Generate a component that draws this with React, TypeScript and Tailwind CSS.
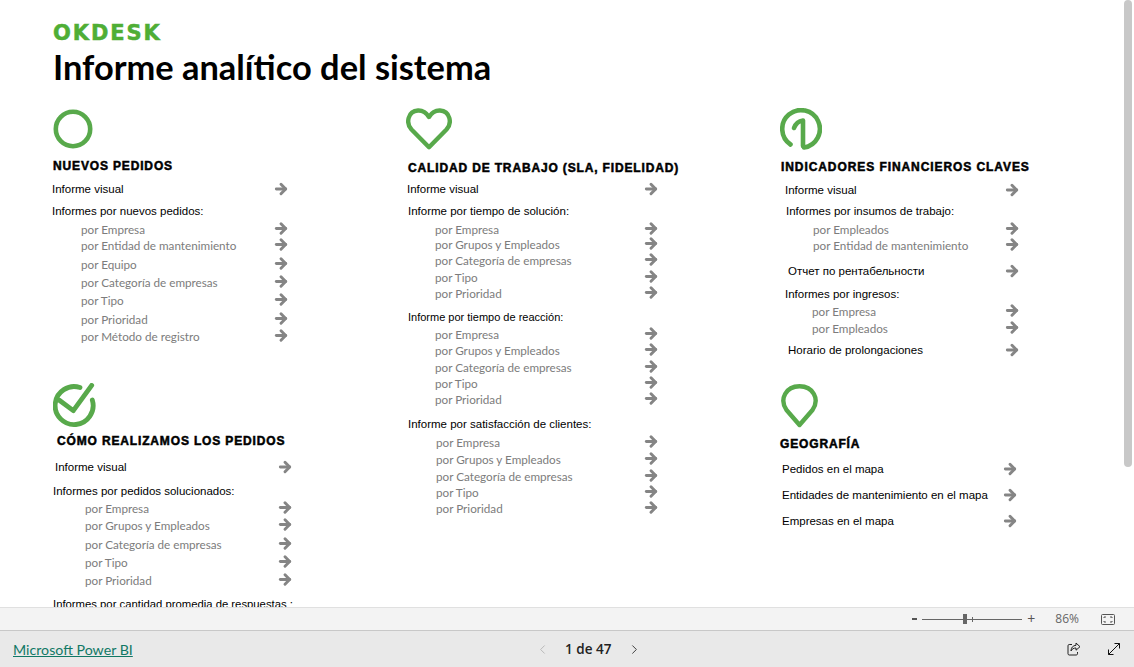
import { ArrowRight, ChevronLeft, ChevronRight } from 'lucide-react'

type RowData = {
  text: string
  // margin + indent, written out so tailwind picks them up
  cls: string
  kind?: 'main' | 'sub'
}

const GREEN = '#58a94b'

function Arrow() {
  return <ArrowRight className="-mr-[1px] h-[16px] w-[16px] text-[#858585]" strokeWidth={4.4} />
}

function Rows({ rows, width }: { rows: RowData[]; width: string }) {
  return (
    <div className={`text-[11.5px] ${width}`}>
      {rows.map((row, i) => (
        <div key={i} className={`flex h-[16px] items-center justify-between ${row.cls}`}>
          {row.kind === 'sub' ? (
            <span className="font-['Lato',sans-serif] text-[11.7px] whitespace-nowrap text-[#7c7c7c]">{row.text}</span>
          ) : (
            <span className="translate-y-[1px] font-['Liberation_Sans',sans-serif] whitespace-nowrap text-black">{row.text}</span>
          )}
          {!row.text.endsWith(':') && (
            <span className={row.kind === 'sub' ? '-translate-y-[1.5px]' : ''}>
              <Arrow />
            </span>
          )}
        </div>
      ))}
    </div>
  )
}

function Heading({ children, className }: { children: string; className: string }) {
  return (
    <h2 className={`font-['Liberation_Sans',sans-serif] text-[12px] leading-[16px] font-bold tracking-[0.85px] whitespace-nowrap text-black [-webkit-text-stroke:0.5px_black] ${className}`}>
      {children}
    </h2>
  )
}

const nuevos: RowData[] = [
  { text: 'Informe visual', cls: 'mt-[7px]' },
  { text: 'Informes por nuevos pedidos:', cls: 'mt-[6px]' },
  { text: 'por Empresa', cls: 'mt-[3px] pl-[29px]', kind: 'sub' },
  { text: 'por Entidad de mantenimiento', cls: 'mt-[0px] pl-[29px]', kind: 'sub' },
  { text: 'por Equipo', cls: 'mt-[3px] pl-[29px]', kind: 'sub' },
  { text: 'por Categoría de empresas', cls: 'mt-[2px] pl-[29px]', kind: 'sub' },
  { text: 'por Tipo', cls: 'mt-[2px] pl-[29px]', kind: 'sub' },
  { text: 'por Prioridad', cls: 'mt-[3px] pl-[29px]', kind: 'sub' },
  { text: 'por Método de registro', cls: 'mt-[1px] pl-[29px]', kind: 'sub' },
]

const realizamos: RowData[] = [
  { text: 'Informe visual', cls: 'mt-[10px] pl-[3px]' },
  { text: 'Informes por pedidos solucionados:', cls: 'mt-[8px] pl-[1px]' },
  { text: 'por Empresa', cls: 'mt-[2px] pl-[33px]', kind: 'sub' },
  { text: 'por Grupos y Empleados', cls: 'mt-[1px] pl-[33px]', kind: 'sub' },
  { text: 'por Categoría de empresas', cls: 'mt-[3px] pl-[33px]', kind: 'sub' },
  { text: 'por Tipo', cls: 'mt-[2px] pl-[33px]', kind: 'sub' },
  { text: 'por Prioridad', cls: 'mt-[2px] pl-[33px]', kind: 'sub' },
  { text: 'Informes por cantidad promedia de respuestas :', cls: 'mt-[6px] pl-[1px] text-[11.3px]' },
]

const calidad: RowData[] = [
  { text: 'Informe visual', cls: 'mt-[5px] pl-[1px]' },
  { text: 'Informe por tiempo de solución:', cls: 'mt-[6px] pl-[2px]' },
  { text: 'por Empresa', cls: 'mt-[3px] pl-[29px]', kind: 'sub' },
  { text: 'por Grupos y Empleados', cls: 'mt-[-1px] pl-[29px]', kind: 'sub' },
  { text: 'por Categoría de empresas', cls: 'mt-[0px] pl-[29px]', kind: 'sub' },
  { text: 'por Tipo', cls: 'mt-[1px] pl-[29px]', kind: 'sub' },
  { text: 'por Prioridad', cls: 'mt-[0px] pl-[29px]', kind: 'sub' },
  { text: 'Informe por tiempo de reacción:', cls: 'mt-[6px] pl-[2px] text-[11px]' },
  { text: 'por Empresa', cls: 'mt-[3px] pl-[29px]', kind: 'sub' },
  { text: 'por Grupos y Empleados', cls: 'mt-[0px] pl-[29px]', kind: 'sub' },
  { text: 'por Categoría de empresas', cls: 'mt-[1px] pl-[29px]', kind: 'sub' },
  { text: 'por Tipo', cls: 'mt-[0px] pl-[29px]', kind: 'sub' },
  { text: 'por Prioridad', cls: 'mt-[0px] pl-[29px]', kind: 'sub' },
  { text: 'Informe por satisfacción de clientes:', cls: 'mt-[8px] pl-[2px]' },
  { text: 'por Empresa', cls: 'mt-[3px] pl-[30px]', kind: 'sub' },
  { text: 'por Grupos y Empleados', cls: 'mt-[1px] pl-[30px]', kind: 'sub' },
  { text: 'por Categoría de empresas', cls: 'mt-[1px] pl-[30px]', kind: 'sub' },
  { text: 'por Tipo', cls: 'mt-[0px] pl-[30px]', kind: 'sub' },
  { text: 'por Prioridad', cls: 'mt-[0px] pl-[30px]', kind: 'sub' },
]

const financieros: RowData[] = [
  { text: 'Informe visual', cls: 'mt-[7px] pl-[5px]' },
  { text: 'Informes por insumos de trabajo:', cls: 'mt-[5px] pl-[6px]' },
  { text: 'por Empleados', cls: 'mt-[3px] pl-[33px]', kind: 'sub' },
  { text: 'por Entidad de mantenimiento', cls: 'mt-[0px] pl-[33px]', kind: 'sub' },
  { text: 'Отчет по рентабельности', cls: 'mt-[9px] pl-[8px]' },
  { text: 'Informes por ingresos:', cls: 'mt-[7px] pl-[5px]' },
  { text: 'por Empresa', cls: 'mt-[2px] pl-[32px]', kind: 'sub' },
  { text: 'por Empleados', cls: 'mt-[1px] pl-[32px]', kind: 'sub' },
  { text: 'Horario de prolongaciones', cls: 'mt-[5px] pl-[8px]' },
]

const geografia: RowData[] = [
  { text: 'Pedidos en el mapa', cls: 'mt-[9px] pl-[2px]' },
  { text: 'Entidades de mantenimiento en el mapa', cls: 'mt-[10px] pl-[2px]' },
  { text: 'Empresas en el mapa', cls: 'mt-[10px] pl-[2px]' },
]

function CircleIcon() {
  return (
    <svg width="40" height="40" viewBox="0 0 40 40" fill="none" className="block">
      <circle cx="20" cy="20" r="17.2" stroke={GREEN} strokeWidth="4.6" />
    </svg>
  )
}

function CheckIcon() {
  return (
    <svg width="43" height="44" viewBox="0 0 43 44" fill="none" className="block">
      <path d="M39.3 17A19 19 0 1 1 27 4.5" stroke={GREEN} strokeWidth="4.8" strokeLinecap="round" />
      <path d="M6 17L20.3 27.7L38.7 2.4" stroke={GREEN} strokeWidth="4.8" strokeLinecap="round" strokeLinejoin="round" />
    </svg>
  )
}

function HeartIcon() {
  return (
    <svg width="46" height="42" viewBox="0 0 46 42" fill="none" className="block">
      <path
        d="M23 39.2L5.5 21.5C-0.5 15 2 3 12 2.5C17 2.3 20.5 5 23 9C25.5 5 29 2.3 34 2.5C44 3 46.5 15 40.5 21.5Z"
        stroke={GREEN}
        strokeWidth="4.4"
        strokeLinejoin="round"
      />
    </svg>
  )
}

function OneIcon() {
  return (
    <svg width="42" height="42" viewBox="0 0 42 42" fill="none" className="block">
      <path d="M10.5 36.5A18.8 18.8 0 1 1 24 39.5" stroke={GREEN} strokeWidth="4.6" strokeLinecap="round" />
      <path d="M14 20C15.5 16 19 13 23 12.5V38" stroke={GREEN} strokeWidth="4.6" strokeLinecap="round" strokeLinejoin="round" />
    </svg>
  )
}

function PinIcon() {
  return (
    <svg width="37" height="44" viewBox="0 0 37 44" fill="none" className="block">
      <path
        d="M18.5 41L5.5 26C-2 15 5 2.3 18.5 2.3C32 2.3 39 15 31.5 26Z"
        stroke={GREEN}
        strokeWidth="4.4"
        strokeLinejoin="round"
      />
    </svg>
  )
}

function FitIcon() {
  return (
    <svg width="14" height="11" viewBox="0 0 14 11" fill="none" className="block text-[#555]" stroke="currentColor">
      <rect x="0.5" y="0.5" width="13" height="10" rx="1" />
      <path d="M3 4V3H5M9 3H11V4M11 7V8H9M5 8H3V7" />
    </svg>
  )
}

function ShareIcon() {
  return (
    <svg width="14" height="14" viewBox="0 0 14 14" fill="none" className="block" stroke="#222" strokeWidth="1">
      <path d="M5 2.5H2.2C1.5 2.5 1 3 1 3.7V11.8C1 12.5 1.5 13 2.2 13H9.3C10 13 10.5 12.5 10.5 11.8V10" />
      <path d="M9 1L13 4.7L9 8.2V6C6.5 6 5 7 4 9C4 5.5 6 3.5 9 3.3Z" strokeLinejoin="round" />
    </svg>
  )
}

function ExpandIcon() {
  return (
    <svg width="14" height="14" viewBox="0 0 14 14" fill="none" className="block" stroke="#111" strokeWidth="1">
      <path d="M1.5 12.5L12.5 1.5M7.5 1.5H12.5V6.5M1.5 7.5V12.5H6.5" />
    </svg>
  )
}

export default function App() {
  return (
    <div className="flex h-[667px] w-[1134px] flex-col overflow-hidden bg-white">
      <div className="flex h-[607px] shrink-0 overflow-hidden">
        <main className="h-full w-[1124px] shrink-0 overflow-hidden pt-[21px] pl-[52px]">
          <div className="ml-[1px] font-['DejaVu_Sans',sans-serif] text-[21px] leading-[24px] font-bold tracking-[1.9px] text-[#4fae35] [-webkit-text-stroke:0.5px_#4fae35]">
            OKDESK
          </div>
          <h1 className="ml-[1px] font-['Lato',sans-serif] text-[34.4px] leading-[44px] font-bold whitespace-nowrap text-black">
            Informe analítico del sistema
          </h1>

          <div className="mt-[19px] flex">
            <section className="w-[354px] shrink-0">
              <div className="ml-[1px] pt-[1px]"><CircleIcon /></div>
              <Heading className="mt-[9px] ml-[1px]">NUEVOS PEDIDOS</Heading>
              <Rows rows={nuevos} width="w-[236px]" />
              <div className="mt-[38px] ml-[1px]"><CheckIcon /></div>
              <Heading className="mt-[6px] ml-[5px]">CÓMO REALIZAMOS LOS PEDIDOS</Heading>
              <Rows rows={realizamos} width="w-[240px]" />
            </section>

            <section className="w-[374px] shrink-0">
              <HeartIcon />
              <Heading className="mt-[10px] ml-[2px]">CALIDAD DE TRABAJO (SLA, FIDELIDAD)</Heading>
              <Rows rows={calidad} width="w-[252px]" />
            </section>

            <section className="w-[300px] shrink-0">
              <OneIcon />
              <Heading className="mt-[9px] ml-[1px] tracking-[0.92px]">INDICADORES FINANCIEROS CLAVES</Heading>
              <Rows rows={financieros} width="w-[239px]" />
              <div className="mt-[26px] ml-[1px]"><PinIcon /></div>
              <Heading className="mt-[8px]">GEOGRAFÍA</Heading>
              <Rows rows={geografia} width="w-[237px]" />
            </section>
          </div>
        </main>
        <div className="ml-auto h-full w-[10px] pr-[2px]">
          <div className="h-[467px] w-[8px] rounded-t-[4px] rounded-b-[4px] bg-[#c8c8c8]" />
        </div>
      </div>

      <div className="flex h-[24px] shrink-0 items-center justify-end border-y border-t-[#e0e0e0] border-b-[#c8c8c8] bg-[#f3f3f3] pr-[19px]">
        <span className="mr-[5px] h-[2px] w-[5px] bg-[#555]" />
        <div className="relative mr-[5px] flex h-[10px] w-[100px] items-center">
          <div className="h-px w-full bg-[#666]" />
          <div className="absolute left-[41px] h-[10px] w-[4px] bg-[#666]" />
          <div className="absolute left-[50px] h-[5px] w-px bg-[#666]" />
        </div>
        <span className="font-['Open_Sans',sans-serif] text-[14px] leading-none text-[#555]">+</span>
        <span className="mr-[22px] ml-[20px] font-['Open_Sans',sans-serif] text-[12px] text-[#666]">86%</span>
        <FitIcon />
      </div>

      <footer className="relative flex flex-1 items-center justify-between bg-[#e9e9e9] pr-[13px] pl-[13px]">
        <a href="#" className="translate-y-[1px] font-['Lato',sans-serif] text-[14.2px] text-[#117865] underline">
          Microsoft Power BI
        </a>
        <nav className="absolute left-[535px] flex items-center">
          <ChevronLeft className="h-[15px] w-[15px] text-[#b5b5b5]" strokeWidth={1.5} />
          <span className="mr-[16px] ml-[15px] font-['Open_Sans',sans-serif] text-[13.5px] font-semibold text-[#222]">1 de 47</span>
          <ChevronRight className="h-[15px] w-[15px] text-[#333]" strokeWidth={1.5} />
        </nav>
        <div className="flex items-center gap-[26px]">
          <ShareIcon />
          <ExpandIcon />
        </div>
      </footer>
    </div>
  )
}
